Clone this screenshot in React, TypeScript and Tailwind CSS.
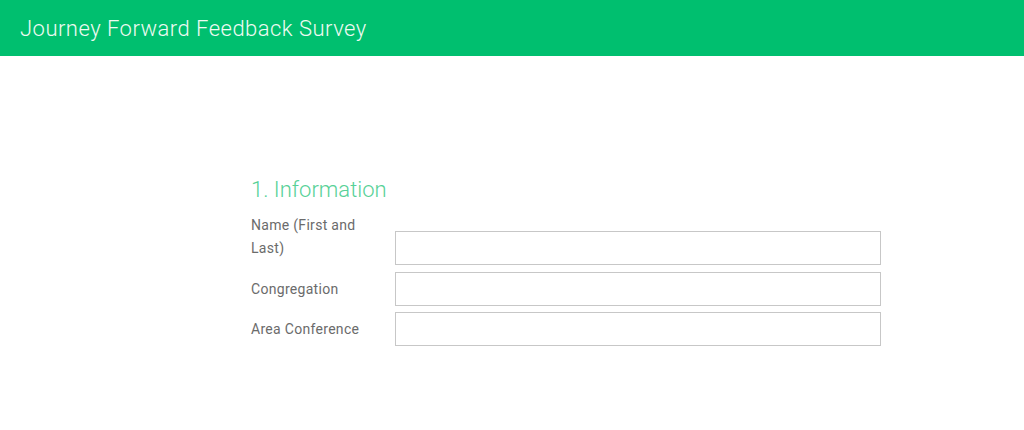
import React from "react";

export default function App() {
  return (
    <div className="w-[1024px] h-[430px] bg-white font-['Roboto',sans-serif]">
      <header className="h-[56px] bg-[#00bf6f] flex items-center px-[20px]">
        <h1 className="text-[22px] font-light text-[#eefaf2] tracking-[0.48px]">
          Journey Forward Feedback Survey
        </h1>
      </header>

      <main className="pl-[251px] pt-[120px]">
        <h2 className="text-[22px] font-light text-[#57d197] leading-[28px]">1. Information</h2>
        <div className="mt-[10px] flex flex-col gap-[6.5px] w-[630px]">
          <Field label="Name (First and Last)" />
          <Field label="Congregation" />
          <Field label="Area Conference" />
        </div>
      </main>
    </div>
  );
}

const Field = ({ label }: { label: string }) => {
  return (
    <div className="flex items-end">
      <label className="w-[144px] pr-[30px] mb-[5px] text-[14px] leading-[23px] tracking-[0.3px] text-[#6b6b6b]">
        {label}
      </label>
      <input
        type="text"
        className="w-[486px] h-[34px] border border-[#c7c7c7] bg-white outline-none"
      />
    </div>
  );
};
